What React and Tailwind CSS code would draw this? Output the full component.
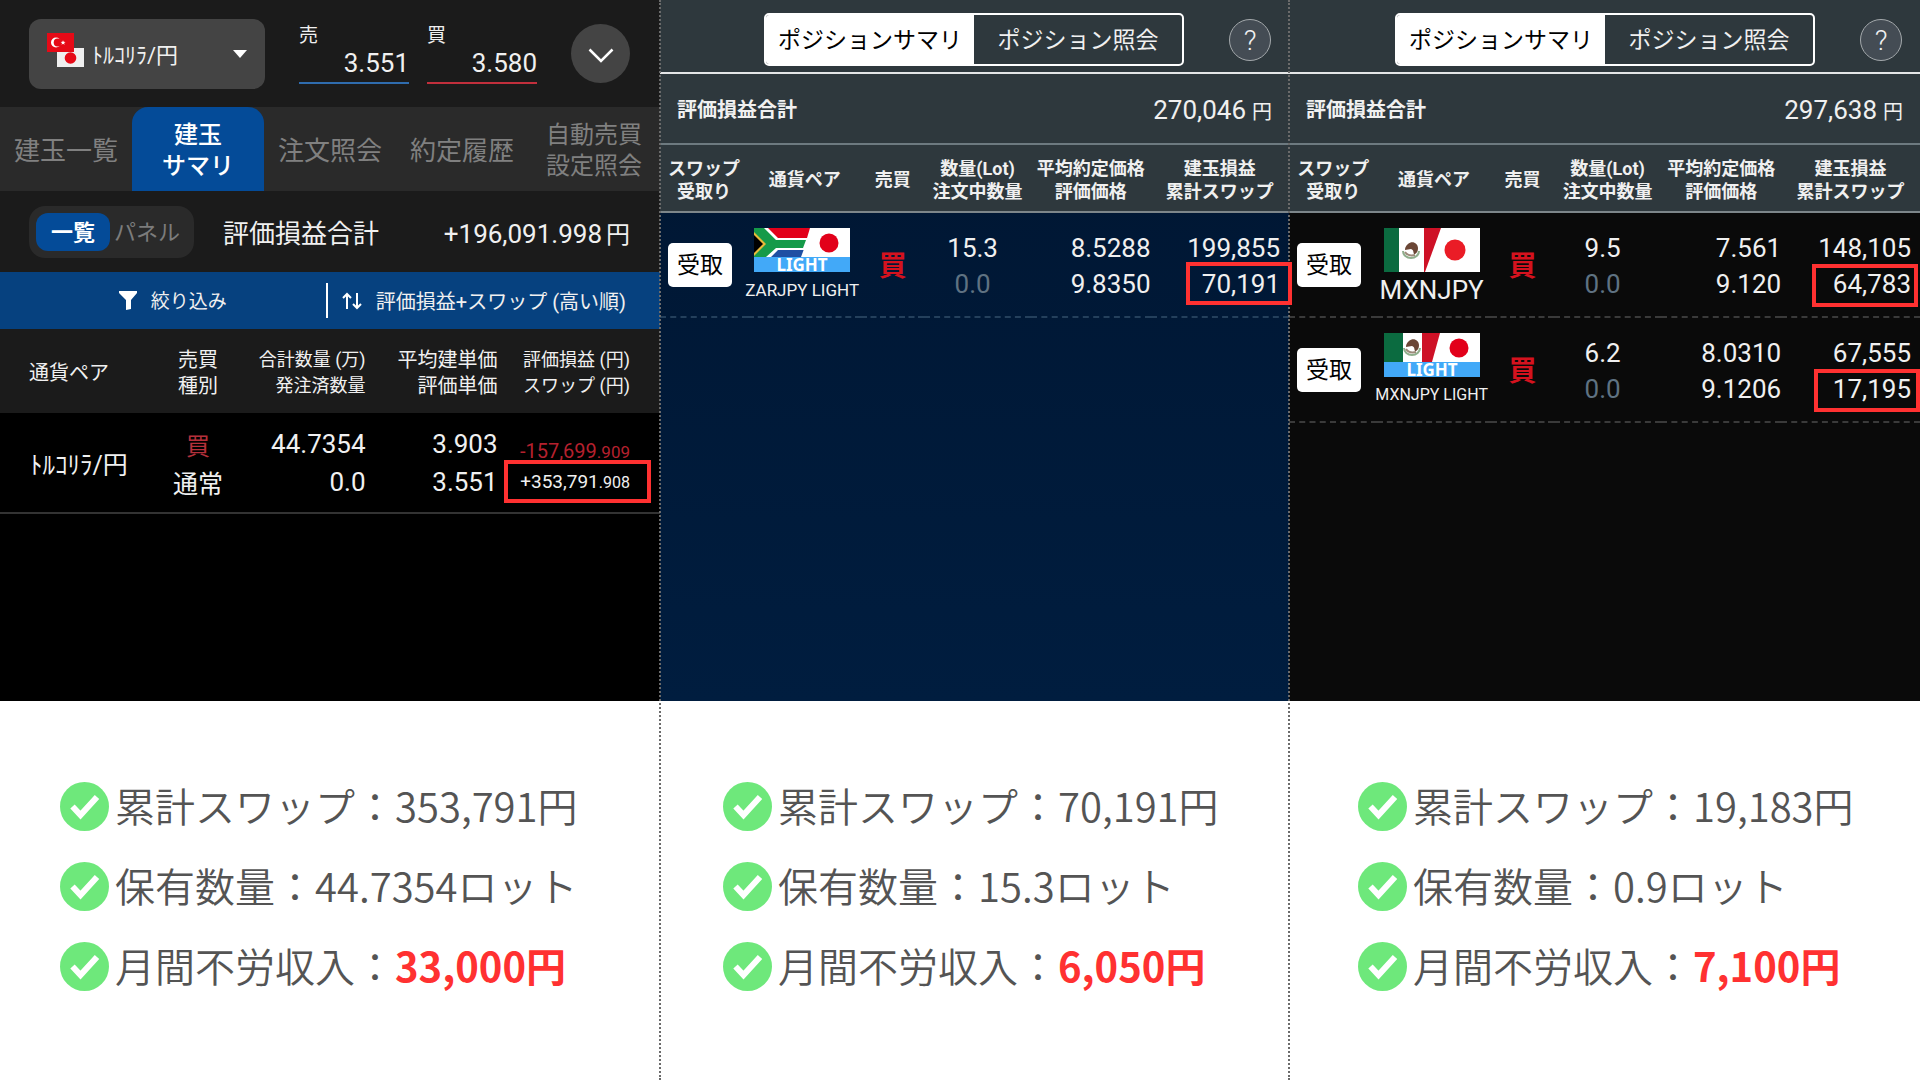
import React from "react";

const SANS = "font-['Roboto','Noto_Sans_CJK_JP',sans-serif]";
const CJK = "font-['Noto_Sans_CJK_JP',sans-serif]";

function CurrencyIcon() {
  return (
    <svg width="38" height="42" viewBox="0 0 38 42" aria-hidden="true" className="shrink-0">
      <path d="M10 15h27v19H10z" fill="#efefef" />
      <rect width="27" height="19" fill="#e60a17" />
      <circle cx="9" cy="9.5" r="5" fill="#fff" />
      <circle cx="10.6" cy="9.5" r="3.9" fill="#e60a17" />
      <path d="M16 7.2l.7 1.6 1.800.1-1.400 1.100.5 1.700-1.600-1-1.500 1 .5-1.700-1.400-1.100 1.800-.1z" fill="#fff" />
      <circle cx="23.5" cy="25" r="5.8" fill="#e60a17" />
    </svg>
  );
}

function MexicoEmblem({ x, y }) {
  return (
    <g transform={`translate(${x} ${y})`}>
      <path d="M-8 1a8 7 0 0 0 16 0" fill="none" stroke="#8fae8c" strokeWidth="2" />
      <path d="M-3-6c4-4 10-1 10 4 0 4-2 6-4 6-1-2 0-4-3-5-2 0-4 1-6 1 0-3 1-4 3-6z" fill="#6b4636" />
      <path d="M-6 2c2 3 6 4 10 3" fill="none" stroke="#9c8a7a" strokeWidth="2" />
    </g>
  );
}

function Flag({ kind }) {
  return (
    <svg width="96" height="44" viewBox="0 0 96 44" aria-hidden="true" className="shrink-0 overflow-visible">
      <rect width="96" height="44" fill="#fff" />
      {kind === "zar" && (
        <g>
          <path d="M12 0h44l-3 10H23z" fill="#e2001a" />
          <path d="M22 21h28l-3 8H13z" fill="#1f4fa3" />
          <path d="M9 0h5l10 10h29l-1 2H22zM11 29l11-9h29l-1 2H24l-7 7z" fill="#fff" />
          <path d="M0 0h10l12 12h30l-3 8H22l-10 9H0z" fill="#159a49" />
          <path d="M0 4l12 12L0 28z" fill="#e8b93a" />
          <path d="M0 7l9 9-9 9z" fill="#000" />
          <circle cx="75" cy="15" r="9.500" fill="#e2001a" />
        </g>
      )}
      {kind === "mxn" && (
        <g>
          <rect width="15" height="44" fill="#0b6b40" />
          <path d="M40 0h17L41 44h-1z" fill="#ce1126" />
          <MexicoEmblem x="27" y="22" />
          <circle cx="71" cy="22" r="10.500" fill="#ea1c26" />
        </g>
      )}
      {kind === "mxnlight" && (
        <g>
          <rect width="19" height="29" fill="#0b6b40" />
          <path d="M38 0h18l-8 29H38z" fill="#ce1126" />
          <MexicoEmblem x="28" y="14" />
          <circle cx="75" cy="15" r="9.500" fill="#e2001a" />
        </g>
      )}
      {kind !== "mxn" && (
        <g>
          <rect y="29" width="96" height="15" fill="#42a9f8" />
          <text x="48" y="43" textAnchor="middle" fill="#fff" fontFamily="'Noto Sans', sans-serif" fontSize="17" fontWeight="700">LIGHT</text>
        </g>
      )}
    </svg>
  );
}

function Marked({ children, className }) {
  return (
    <span className="relative">
      {children}
      <span className={"absolute z-20 border-4 border-[#ff3131] " + className} />
    </span>
  );
}

function Quote({ label, value, line }) {
  return (
    <div className={"flex w-[110px] flex-col border-b-2 pb-1 " + line}>
      <span className="text-[19px] leading-[24px]">{label}</span>
      <span className="text-right text-[26px] leading-[30px]">{value}</span>
    </div>
  );
}

function LiraPanel() {
  const tab = "flex h-full items-center justify-center pt-1 text-[#808080]";
  return (
    <section className={"flex h-[701px] flex-col bg-black text-[#f0f0f0] " + SANS}>
      <header className="flex h-[107px] items-center bg-[#1b1b1b] pr-[30px] pl-[29px]">
        <button className="flex h-[70px] w-[236px] items-center rounded-xl bg-[#444444] pr-[18px] pl-[18px]">
          <CurrencyIcon />
          <span className="ml-[7px] pt-[3px] text-[22px]">ﾄﾙｺﾘﾗ/円</span>
          <svg width="14" height="8" viewBox="0 0 14 8" className="ml-auto" aria-hidden="true">
            <path d="M0 0h14L7 8z" fill="#fff" />
          </svg>
        </button>
        <div className="ml-[34px] flex gap-[18px]">
          <Quote label="売" value="3.551" line="border-[#2f6cae]" />
          <Quote label="買" value="3.580" line="border-[#c22f3c]" />
        </div>
        <button aria-label="詳細を開く" className="ml-auto flex size-[59px] items-center justify-center rounded-full bg-[#444444]">
          <svg width="26" height="15" viewBox="0 0 26 15" fill="none" aria-hidden="true" className="mt-1">
            <path d="M1.500 1.500L13 13 24.500 1.500" stroke="#fff" strokeWidth="2.500" />
          </svg>
        </button>
      </header>

      <nav className="grid h-[84px] grid-cols-5 bg-[#2a2a2a] text-[26px]">
        <button className={tab}>建玉一覧</button>
        <button className="h-full rounded-t-2xl bg-[#044b98] pt-1 text-2xl leading-[31px] font-medium text-white">建玉<br />サマリ</button>
        <button className={tab}>注文照会</button>
        <button className={tab}>約定履歴</button>
        <button className={tab + " text-2xl leading-[31px]"}>自動売買<br />設定照会</button>
      </nav>

      <div className="flex h-[81px] items-center bg-[#1b1b1b] pr-[30px] pl-[29px]">
        <div className="flex h-[52px] w-[165px] items-center rounded-2xl bg-[#2a2a2a] pl-[7px]">
          <button className="h-[38px] w-[74px] rounded-xl bg-[#044b98] text-[22px] leading-[40px] font-bold text-white">一覧</button>
          <button className="ml-1 pt-[2px] text-[22px] text-[#7c7c7c]">パネル</button>
        </div>
        <span className="ml-[29px] pt-[5px] text-[26px]">評価損益合計</span>
        <span className="ml-auto pt-[5px] text-[26px]">+196,091.998<span className="ml-1 text-2xl">円</span></span>
      </div>

      <div className="flex h-[57px] items-center bg-[#06417f] pr-[34px]">
        <button className="flex w-[52%] items-center justify-center gap-[14px] pl-5 text-[19px]">
          <svg width="18" height="19" viewBox="0 0 18 19" aria-hidden="true"><path d="M0 0h18v2l-6 7v9l-5 1V9L0 2z" fill="#fff" /></svg>
          <span className="pt-1">絞り込み</span>
        </button>
        <button className="flex flex-1 items-center justify-between text-[20px] whitespace-nowrap">
          <span className="h-[35px] w-[2px] bg-white" />
          <svg width="20" height="18" viewBox="0 0 20 18" fill="none" stroke="#fff" strokeWidth="2" aria-hidden="true">
            <path d="M5 17V2M1 6l4-4 4 4M15 1v15M11 12l4 4 4-4" />
          </svg>
          <span className="pt-[3px]">評価損益+スワップ (高い順)</span>
        </button>
      </div>

      <table className="w-full table-fixed">
        <colgroup>
          <col className="w-[23%]" /><col className="w-[14%]" /><col className="w-[19%]" /><col className="w-[20%]" /><col />
        </colgroup>
        <thead className="bg-[#1b1b1b] leading-[26px]">
          <tr className="h-[84px] whitespace-nowrap [&>th]:p-0 [&>th]:pt-[3px] [&>th]:font-normal">
            <th className="text-left text-[20px]"><span className="pl-[29px]">通貨ペア</span></th>
            <th className="text-center text-[20px]">売買<br />種別</th>
            <th className="text-right text-[18px]"><div className="pr-1">合計数量 (万)<br />発注済数量</div></th>
            <th className="text-right text-[20px]"><div className="pr-1">平均建単価<br />評価単価</div></th>
            <th className="text-right text-[18px]"><div className="pr-[30px]">評価損益 (円)<br />スワップ (円)</div></th>
          </tr>
        </thead>
        <tbody className="text-[26px] leading-[38px]">
          <tr className="h-[100px] border-b-2 border-[#333333] [&>td]:p-0">
            <td><div className="pt-[6px] pl-[30px] text-[25px]">ﾄﾙｺﾘﾗ/円</div></td>
            <td><div className="pt-[6px] text-center text-[25px]"><span className="text-2xl text-[#b5303b]">買</span><br />通常</div></td>
            <td className="text-right"><div className="pr-1">44.7354<br />0.0</div></td>
            <td className="text-right"><div className="pr-1">3.903<br />3.551</div></td>
            <td>
              <div className="pt-2 pr-[30px] text-right text-[20px] leading-[29px]">
                <span className="text-[#b5202e]">-157,699<span className="text-[17px]">.909</span></span><br />
                <Marked className="-top-[9px] -right-[21px] h-[43px] w-[147px] text-[19px]"><span className="text-[19px]">+353,791</span><span className="text-[16px]">.908</span></Marked>
              </div>
            </td>
          </tr>
        </tbody>
      </table>
    </section>
  );
}

function PositionPanel({ total, rows, body, dash }) {
  return (
    <section className={"flex h-[701px] flex-col text-[#f0f0f0] " + SANS + " " + body}>
      <header className="flex h-[74px] items-center justify-end border-b-2 border-[#e4e6e7] bg-[#2e383d] pt-[7px] pr-[18px]">
        <div className="flex h-[53px] w-[420px] overflow-hidden rounded-[5px] border-2 border-white text-[23px]">
          <button className="w-1/2 bg-white pt-[3px] whitespace-nowrap text-black">ポジションサマリ</button>
          <button className="w-1/2 pt-[3px] whitespace-nowrap">ポジション照会</button>
        </div>
        <button aria-label="ヘルプ" className="ml-[45px] size-[42px] rounded-full border border-[#a4a9ac] bg-[#444c54] text-[28px] leading-[42px] font-light">?</button>
      </header>
      <div className="flex h-[71px] items-center justify-between border-b-2 border-[#6d7a80] bg-[#2e383d] pt-[3px] pr-[17px] pl-[17px]">
        <span className="text-[20px] font-bold">評価損益合計</span>
        <span className="text-[26px]">{total}<span className="ml-[6px] text-[20px]">円</span></span>
      </div>
      <table className="w-full table-fixed">
        <colgroup>
          <col className="w-[14%]" /><col className="w-[18%]" /><col className="w-[10%]" /><col className="w-[17%]" /><col className="w-[19%]" /><col />
        </colgroup>
        <thead>
          <tr className="h-[67px] border-b-2 border-[#7d868a] bg-[#2e383d] text-[18px] leading-[23px] whitespace-nowrap [&>th]:p-0 [&>th]:pt-[3px] [&>th]:text-center [&>th]:font-bold">
            <th>スワップ<br />受取り</th>
            <th>通貨ペア</th>
            <th>売買</th>
            <th>数量(Lot)<br />注文中数量</th>
            <th>平均約定価格<br />評価価格</th>
            <th>建玉損益<br />累計スワップ</th>
          </tr>
        </thead>
        <tbody>
          {rows.map((r) => (
            <tr key={r.name} className="h-[105px] text-[26px] leading-[36px] [&>td]:p-0">
              <td className={dash}><button className="ml-[8px] h-[44px] w-[64px] rounded-[5px] bg-white text-[23px] leading-[46px] text-black">受取</button></td>
              <td className={dash}>
                <div className="flex h-[86px] flex-col items-center pt-[6px] pr-[5px] whitespace-nowrap">
                  <Flag kind={r.flag} />
                  <span className={r.nameSize}>{r.name}</span>
                </div>
              </td>
              <td className={"text-center text-[28px] font-bold text-[#d5121e] " + dash}>
                <div className="pt-[5px]">買</div>
              </td>
              <td className={dash}><div className="pt-[3px] pr-[10px] text-center">{r.lot}<br /><span className="text-[#5f7282]">0.0</span></div></td>
              <td className={"text-right " + dash}><div className="pt-[3px]">{r.avg}<br />{r.price}</div></td>
              <td className={dash}><div className="pt-[3px] pr-[9px] text-right">{r.pl}<br /><Marked className={r.mark}>{r.swap}</Marked></div></td>
            </tr>
          ))}
        </tbody>
      </table>
    </section>
  );
}

function Check() {
  return (
    <svg width="49" height="49" viewBox="0 0 49 49" aria-hidden="true" className="shrink-0">
      <circle cx="24.500" cy="24.500" r="24.500" fill="#6ee87b" />
      <path d="M12.500 24.500l8 8.500L37 15" fill="none" stroke="#fff" strokeWidth="6" />
    </svg>
  );
}

function Summary({ swap, lots, income, className }) {
  const row = "flex h-[80px] items-center gap-[6px] whitespace-nowrap";
  return (
    <ul className={"pt-[65px] text-[40px] font-[350] text-[#545454] [&_span]:pb-[3px] " + CJK + " " + className}>
      <li className={row}><Check /><span>累計スワップ：{swap}円</span></li>
      <li className={row}><Check /><span>保有数量：{lots}ロット</span></li>
      <li className={row}><Check /><span>月間不労収入：<strong className="font-bold text-[#ff3131]">{income}円</strong></span></li>
    </ul>
  );
}

export default function App() {
  const divider =
    "relative after:absolute after:inset-y-0 after:-left-px after:z-10 after:border-l-2 after:border-dotted after:border-[#6b6b6b]";
  return (
    <main lang="ja" className="grid min-h-screen grid-cols-[660fr_629fr_631fr] bg-white">
      <article className="min-w-0">
        <LiraPanel />
        <Summary swap="353,791" lots="44.7354" income="33,000" className="pl-[60px]" />
      </article>
      <article className={"min-w-0 " + divider}>
        <PositionPanel
          total="270,046"
          body="bg-linear-to-b from-[#001530] to-[#001d3f]"
          dash="border-b-2 border-dashed border-[#24405c]"
          rows={[{ flag: "zar", name: "ZARJPY LIGHT", nameSize: "text-[17px]", lot: "15.3", avg: "8.5288", price: "9.8350", pl: "199,855", swap: "70,191", mark: "-top-[7px] -right-[12px] h-[43px] w-[106px]" }]}
        />
        <Summary swap="70,191" lots="15.3" income="6,050" className="pl-[63px]" />
      </article>
      <article className={"min-w-0 " + divider}>
        <PositionPanel
          total="297,638"
          body="bg-[#0a0a0a]"
          dash="border-b-2 border-dashed border-[#3a3a3a]"
          rows={[
            { flag: "mxn", name: "MXNJPY", nameSize: "text-[26px]", lot: "9.5", avg: "7.561", price: "9.120", pl: "148,105", swap: "64,783", mark: "-top-[5px] -right-[7px] h-[43px] w-[106px]" },
            { flag: "mxnlight", name: "MXNJPY LIGHT", nameSize: "text-[16px]", lot: "6.2", avg: "8.0310", price: "9.1206", pl: "67,555", swap: "17,195", mark: "-top-[5px] -right-[9px] h-[43px] w-[106px]" },
          ]}
        />
        <Summary swap="19,183" lots="0.9" income="7,100" className="pl-[69px]" />
      </article>
    </main>
  );
}
